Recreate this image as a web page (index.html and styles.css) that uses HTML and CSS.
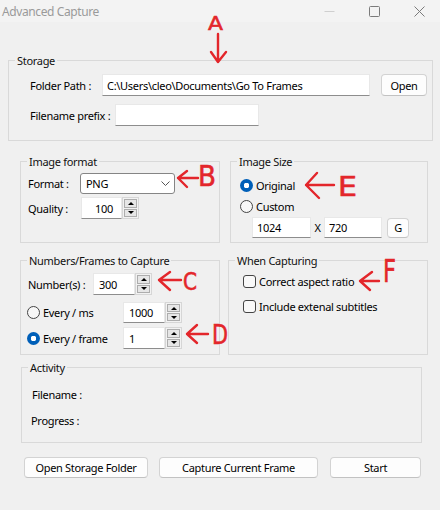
FILE: index.html
```html
<!DOCTYPE html>
<html lang="en">
<head>
<meta charset="utf-8">
<title>Advanced Capture</title>
<link rel="stylesheet" href="styles.css">
</head>
<body>
<div class="window">
  <div class="titlebar">
    <span class="title">Advanced Capture</span>
    <div class="controls">
      <svg class="ctl" width="11" height="11" viewBox="0 0 11 11"><path d="M0.5 5.5H10.5" stroke="#cfcfcf" stroke-width="1"/></svg>
      <svg class="ctl" width="11" height="11" viewBox="0 0 11 11"><rect x="0.5" y="0.5" width="10" height="10" rx="1" fill="none" stroke="#7b7b7b" stroke-width="1"/></svg>
      <svg class="ctl" width="11" height="11" viewBox="0 0 11 11"><path d="M0.5 0.5L10.5 10.5M10.5 0.5L0.5 10.5" stroke="#7b7b7b" stroke-width="1"/></svg>
    </div>
  </div>

  <fieldset class="group storage">
    <legend>Storage</legend>
    <div class="body storage-body">
      <div class="row h22">
        <span class="lbl w-path">Folder Path :</span>
        <div class="textbox path">C:\Users\cleo\Documents\Go To Frames</div>
        <button class="btn open">Open</button>
      </div>
      <div class="row h22 mt8">
        <span class="lbl w-prefix">Filename prefix :</span>
        <div class="textbox prefix"></div>
      </div>
    </div>
  </fieldset>

  <div class="grid">
    <fieldset class="group format">
      <legend>Image format</legend>
      <div class="body format-body">
        <div class="row h21">
          <span class="lbl w-format">Format :</span>
          <div class="select">
            <span>PNG</span>
            <svg class="chev" width="9" height="5" viewBox="0 0 9 5"><path d="M0.5 0.5L4.5 4.5L8.5 0.5" fill="none" stroke="#555" stroke-width="1"/></svg>
          </div>
        </div>
        <div class="row h22 mt3">
          <span class="lbl w-quality">Quality :</span>
          <div class="spinbox">
            <div class="textbox num q">100</div>
            <div class="spin"><span class="up"></span><span class="down"></span></div>
          </div>
        </div>
      </div>
    </fieldset>

    <fieldset class="group size">
      <legend>Image Size</legend>
      <div class="body size-body">
        <div class="row h21">
          <span class="radio on"></span><span class="opt-text">Original</span>
        </div>
        <div class="row h21">
          <span class="radio"></span><span class="opt-text">Custom</span>
        </div>
        <div class="row h21 dims">
          <div class="textbox dim w1">1024</div>
          <span class="x">X</span>
          <div class="textbox dim w2">720</div>
          <button class="btn g">G</button>
        </div>
      </div>
    </fieldset>

    <fieldset class="group numbers">
      <legend>Numbers/Frames to Capture</legend>
      <div class="body numbers-body">
        <div class="row h22">
          <span class="lbl w-number">Number(s) :</span>
          <div class="spinbox">
            <div class="textbox num">300</div>
            <div class="spin"><span class="up"></span><span class="down"></span></div>
          </div>
        </div>
        <div class="row h21 mt7">
          <span class="opt"><span class="radio"></span><span class="opt-text">Every / ms</span></span>
          <div class="spinbox">
            <div class="textbox num">1000</div>
            <div class="spin"><span class="up"></span><span class="down"></span></div>
          </div>
        </div>
        <div class="row h22 mt4">
          <span class="opt"><span class="radio on"></span><span class="opt-text">Every / frame</span></span>
          <div class="spinbox">
            <div class="textbox num">1</div>
            <div class="spin"><span class="up"></span><span class="down"></span></div>
          </div>
        </div>
      </div>
    </fieldset>

    <fieldset class="group capturing">
      <legend>When Capturing</legend>
      <div class="body capturing-body">
        <div class="row h16">
          <span class="check"></span><span class="opt-text">Correct aspect ratio</span>
        </div>
        <div class="row h16 mt9">
          <span class="check"></span><span class="opt-text">Include extenal subtitles</span>
        </div>
      </div>
    </fieldset>
  </div>

  <fieldset class="group activity">
    <legend>Activity</legend>
    <div class="body activity-body">
      <div class="row h16">Filename :</div>
      <div class="row h16 mt10 prog">Progress :</div>
    </div>
  </fieldset>

  <div class="actions">
    <button class="btn b-folder">Open Storage Folder</button>
    <button class="btn b-capture">Capture Current Frame</button>
    <button class="btn b-start">Start</button>
  </div>

  <svg class="marks" width="440" height="510" viewBox="0 0 440 510">
    <g fill="none" stroke="#e3262b" stroke-width="2.4" stroke-linecap="round" stroke-linejoin="round">
      <path d="M218 34L218 62M211 52L218 62L226 52"/>
      <path d="M198 178L178 178M187 171L178 178L187 187"/>
      <path d="M334 185L306 185M317 173L306 185L319 198"/>
      <path d="M181 280L159 280M170 272L159 280L170 290"/>
      <path d="M208 334L187 334M197 325L187 334L197 343"/>
      <path d="M379 281L360 281M372 272L360 281L370 290"/>
    </g>
    <g class="letters" fill="#e3262b" stroke="#e3262b" stroke-width="0.6">
      <text x="208" y="30" font-size="20" textLength="15" lengthAdjust="spacingAndGlyphs">A</text>
      <text x="198" y="186" font-size="29" textLength="18" lengthAdjust="spacingAndGlyphs">B</text>
      <text x="338" y="196" font-size="26" textLength="19" lengthAdjust="spacingAndGlyphs">E</text>
      <text x="183" y="290" font-size="24" textLength="14" lengthAdjust="spacingAndGlyphs">C</text>
      <text x="212" y="344" font-size="27" textLength="16" lengthAdjust="spacingAndGlyphs">D</text>
      <text x="383" y="282" font-size="32" textLength="13" lengthAdjust="spacingAndGlyphs">F</text>
    </g>
  </svg>
</div>
</body>
</html>
```

FILE: styles.css
```css
* { box-sizing: border-box; }
html, body { margin: 0; padding: 0; }
body {
  width: 440px;
  height: 510px;
  overflow: hidden;
  background: #f0f0f0;
  font-family: "Noto Sans", "Liberation Sans", sans-serif;
  font-size: 11px;
  letter-spacing: -0.3px;
  color: #000;
}
.window { position: relative; width: 440px; height: 510px; }

.titlebar {
  height: 22px;
  background: #f3f3f3;
  display: flex;
  align-items: center;
  justify-content: space-between;
}
.title { color: #9a9a9a; font-size: 12px; letter-spacing: -0.4px; padding-left: 2px; }
.controls { display: flex; align-items: center; gap: 34px; padding-right: 15px; }
.ctl { display: block; }

.group {
  margin: 0;
  padding: 0;
  border: 1px solid #d9d9d9;
  min-width: 0;
}
.group legend {
  margin-left: 6px;
  padding: 0 2px;
  line-height: 15px;
  font-size: 11px;
  color: #111;
}
.row { display: flex; align-items: center; }
.h16 { height: 16px; }
.h21 { height: 21px; }
.h22 { height: 22px; }
.mt3 { margin-top: 3px; }
.mt4 { margin-top: 4px; }
.mt7 { margin-top: 7px; }
.mt8 { margin-top: 8px; }
.mt9 { margin-top: 9px; }
.mt10 { margin-top: 10px; }
.lbl { flex: none; white-space: nowrap; }

.textbox {
  height: 100%;
  background: #fff;
  border: 1px solid #e8e8e8;
  border-bottom-color: #8d8d8d;
  display: flex;
  align-items: center;
  padding-left: 4px;
  white-space: nowrap;
  overflow: hidden;
}
.btn {
  margin: 0;
  padding: 0;
  font: inherit;
  letter-spacing: inherit;
  color: #000;
  background: #fdfdfd;
  border: 1px solid #d3d3d3;
  border-bottom-color: #c2c2c2;
  border-radius: 4px;
  display: flex;
  align-items: center;
  justify-content: center;
}

/* storage */
.storage { margin: 31px 0 0 8px; width: 425px; height: 88px; }
.storage-body { padding: 6px 0 0 21px; }
.w-path { width: 72px; }
.path { width: 268px; }
.open { width: 46px; height: 22px; margin-left: 11px; }
.w-prefix { width: 85px; }
.prefix { width: 144px; }

/* grid */
.grid {
  display: grid;
  grid-template-columns: 200px 200px;
  column-gap: 8px;
  row-gap: 10px;
  margin: 13px 0 0 20px;
}
.format, .size { height: 89px; }
.numbers, .capturing { height: 102px; }
.size { width: 198px; margin-left: 2px; }

.format-body { padding: 4px 0 0 7px; }
.w-format { width: 52px; }
.select {
  width: 95px;
  height: 21px;
  background: #fff;
  border: 1px solid #858585;
  border-radius: 3px;
  display: flex;
  align-items: center;
  justify-content: space-between;
  padding: 0 4px 0 5px;
}
.chev { display: block; }
.w-quality { width: 53px; }

.spinbox { display: flex; height: 100%; }
.num { width: 42px; padding-left: 5px; }
.q { width: 41px; padding-left: 13px; }
.spin {
  width: 17px;
  height: 100%;
  display: flex;
  flex-direction: column;
  padding: 1px;
  gap: 1px;
  background: #f2f2f2;
  border: 1px solid #d6d6d6;
}
.spin span {
  flex: 1;
  border: 1px solid #adadad;
  background: #e6e6e6;
  display: flex;
  align-items: center;
  justify-content: center;
}
.spin .up::before {
  content: "";
  border-left: 3px solid transparent;
  border-right: 3px solid transparent;
  border-bottom: 3px solid #000;
}
.spin .down::before {
  content: "";
  border-left: 3px solid transparent;
  border-right: 3px solid transparent;
  border-top: 3px solid #000;
}

/* radio / checkbox */
.radio {
  flex: none;
  width: 13px;
  height: 13px;
  border-radius: 50%;
  border: 1px solid #444;
  background: #f7f7f7;
}
.radio.on {
  border: none;
  background: radial-gradient(circle, #fff 0 2.6px, #005fb8 3px);
}
.check {
  flex: none;
  width: 13px;
  height: 13px;
  border-radius: 3px;
  border: 1px solid #444;
  background: #f9f9f9;
}
.opt-text { margin-left: 3px; white-space: nowrap; }
.opt { display: flex; align-items: center; width: 96px; margin-left: -1px; flex: none; }

.size-body { padding: 6px 0 0 9px; }
.dims { margin-left: 12px; }
.dim.w1 { width: 59px; }
.dim.w2 { width: 58px; }
.x { width: 13px; text-align: center; }
.g { width: 22px; height: 20px; margin-left: 5px; }

.numbers-body { padding: 5px 0 0 7px; }
.w-number { width: 65px; }

.capturing-body { padding: 5px 0 0 14px; }

/* activity */
.activity { margin: 5px 0 0 21px; width: 401px; height: 83px; }
.activity-body { padding: 11px 0 0 10px; }
.prog { margin-left: -1px; }

/* actions */
.actions { display: flex; margin: 14px 0 0 24px; }
.actions .btn { height: 21px; }
.b-folder { width: 124px; }
.b-capture { width: 159px; margin-left: 11px; }
.b-start { width: 91px; margin-left: 12px; }

.marks { position: absolute; left: 0; top: 0; pointer-events: none; }
.letters text { font-family: "DejaVu Sans", sans-serif; letter-spacing: 0; }
```
